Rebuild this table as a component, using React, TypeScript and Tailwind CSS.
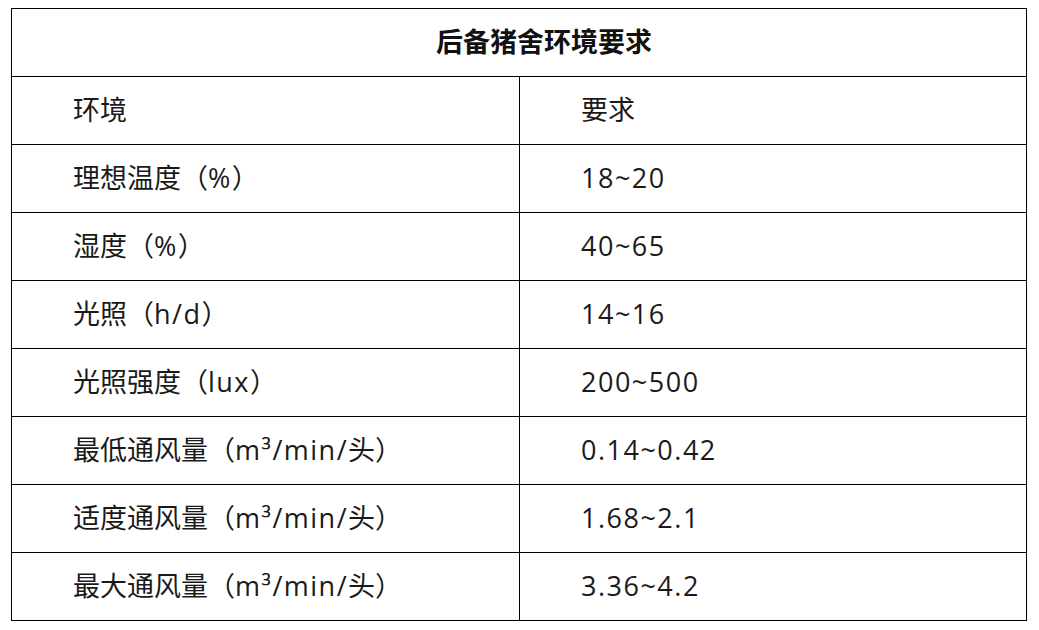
import React from "react";

const rows: [string, string][] = [
  ["环境", "要求"],
  ["理想温度（%）", "18~20"],
  ["湿度（%）", "40~65"],
  ["光照（h/d）", "14~16"],
  ["光照强度（lux）", "200~500"],
  ["最低通风量（m³/min/头）", "0.14~0.42"],
  ["适度通风量（m³/min/头）", "1.68~2.1"],
  ["最大通风量（m³/min/头）", "3.36~4.2"],
];

function Mixed({ text }: { text: string }) {
  const parts = text.split(/([\u4e00-\u9fff（）]+)/).filter((p) => p.length > 0);
  return (
    <span>
      {parts.map((p, i) =>
        /[\u4e00-\u9fff（）]/.test(p) ? (
          <span key={i}>{p}</span>
        ) : (
          <span key={i} className="tracking-[1.5px]">
            {p}
          </span>
        )
      )}
    </span>
  );
}

export default function App() {
  return (
    <div
      className="w-[1039px] h-[630px] bg-white pl-[11px] pt-[8px]"
      style={{ fontFamily: '"Open Sans", "Noto Sans CJK SC", sans-serif' }}
    >
      <div className="w-[1016px] border border-black text-[#1a1a1a] text-[27px]">
        <div className="h-[67px] flex items-center justify-center pl-[50px] font-bold text-[27px] text-[#111]">
          后备猪舍环境要求
        </div>
        {rows.map(([a, b], i) => (
          <div key={i} className="h-[68px] flex border-t border-black">
            <div className="w-[508px] border-r border-black flex items-center pl-[61px]">
              <Mixed text={a} />
            </div>
            <div className="flex-1 flex items-center pl-[61px]">
              <Mixed text={b} />
            </div>
          </div>
        ))}
      </div>
    </div>
  );
}
